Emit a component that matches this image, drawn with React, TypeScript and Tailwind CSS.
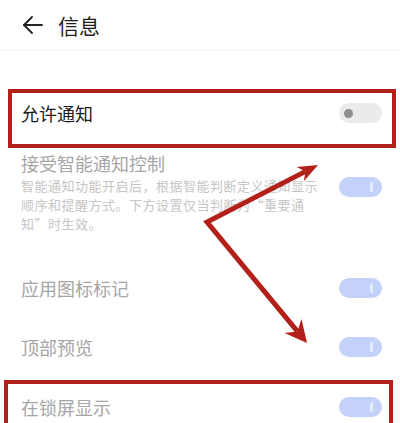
const FONT = '"Noto Sans CJK SC", "Noto Sans", sans-serif';

function OffSwitch() {
  return (
    <div className="w-[43px] h-[20px] rounded-full bg-[#ebebeb] flex items-center pl-[5px]">
      <div className="w-[9px] h-[9px] rounded-full bg-[#8e8e8e]" />
    </div>
  );
}

function OnSwitch() {
  return (
    <div className="w-[43px] h-[20px] rounded-full bg-[#c4d1f8] flex items-center justify-end pr-[9px]">
      <div className="w-[3px] h-[10px] rounded-full bg-[#e6ecfc]" />
    </div>
  );
}

function Row({ label }: { label: string }) {
  return (
    <div className="h-[40px] pl-[21px] pr-[18px] flex items-center justify-between">
      <span className="text-[18px] text-[#a6a6a6]">{label}</span>
      <OnSwitch />
    </div>
  );
}

export default function App() {
  return (
    <div className="relative w-[400px] h-[423px] overflow-hidden bg-white" style={{ fontFamily: FONT }}>
      {/* Header */}
      <header className="h-[51px] border-b border-[#f2f2f2] flex items-center pl-[22px] gap-[14px]">
        <svg width="22" height="20" viewBox="0 0 22 20" fill="none" stroke="#222" strokeWidth="1.8" strokeLinecap="round" strokeLinejoin="round">
          <path d="M2 10 H20" />
          <path d="M10 2 L2 10 L10 18" />
        </svg>
        <h1 className="text-[21px] text-[#1e1e1e] leading-none">信息</h1>
      </header>

      {/* 允许通知 */}
      <div className="mt-[38px] ml-2 mr-1 h-[59px] border-4 border-[#b3201a] pl-[9px] pr-[10px]">
        <div className="h-[40px] flex items-center justify-between">
          <span className="text-[18px] text-[#1a1a1a]">允许通知</span>
          <OffSwitch />
        </div>
      </div>

      {/* 接受智能通知控制 */}
      <div className="h-[88px] pt-[2px] pl-[21px] pr-[18px] flex justify-between items-start">
        <div>
          <div className="text-[18px] leading-[26px] text-[#a6a6a6]">接受智能通知控制</div>
          <p className="text-[13px] leading-[19px] tracking-[0.5px] text-[#c6c6c6]">
            智能通知功能开启后，根据智能判断定义通知显示
            <br />
            顺序和提醒方式。下方设置仅当判断为“重要通
            <br />
            知”时生效。
          </p>
        </div>
        <div className="mt-[27px]">
          <OnSwitch />
        </div>
      </div>

      <div className="mt-[32px]">
        <Row label="应用图标标记" />
      </div>
      <div className="mt-[19px]">
        <Row label="顶部预览" />
      </div>

      {/* 在锁屏显示 */}
      <div className="mt-[13px] ml-1 mr-[7px] h-[60px] border-4 border-b-0 border-[#b3201a] pl-[13px] pr-[7px]">
        <div className="h-[46px] flex items-center justify-between">
          <span className="text-[18px] text-[#a6a6a6]">在锁屏显示</span>
          <OnSwitch />
        </div>
      </div>

      {/* annotation arrows */}
      <svg className="absolute inset-0 pointer-events-none" width="400" height="423" viewBox="0 0 400 423">
        <polyline points="305.6,171.4 207,222 297.4,331.4" fill="none" stroke="#b3201a" strokeWidth="5" strokeLinejoin="miter" strokeMiterlimit="10" />
        <polygon points="318,165 296.6,167 305.6,171.4 303.8,181.2" fill="#b3201a" />
        <polygon points="307,343 284.5,333 297.4,331.4 301.5,319" fill="#b3201a" />
      </svg>
    </div>
  );
}
